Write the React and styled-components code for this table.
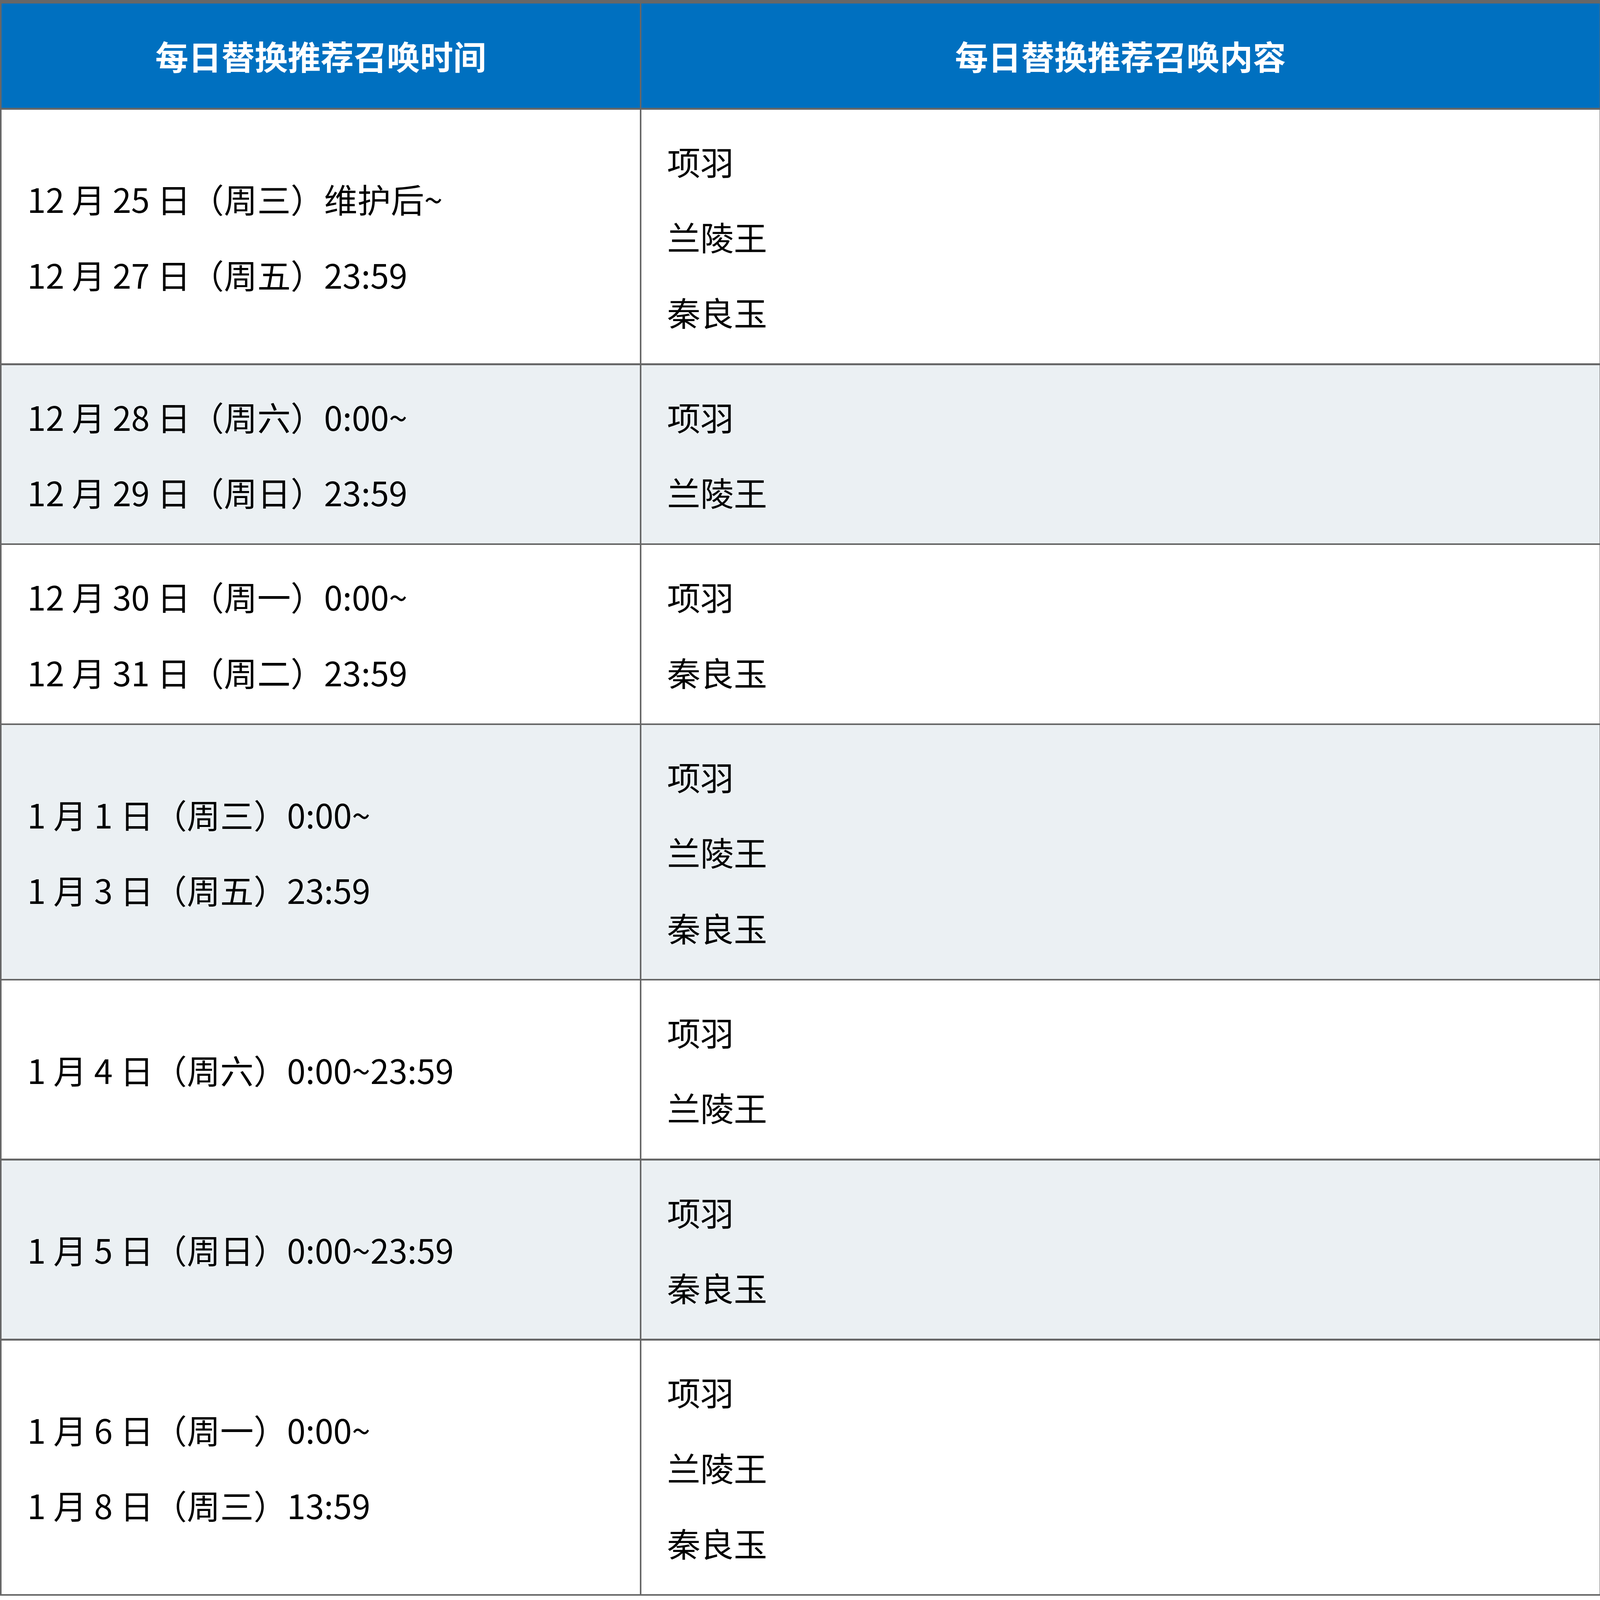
import React from "react";
import styled, { createGlobalStyle } from "styled-components";

// sizes are taken from a 5512px wide layout and scaled to the viewport
const u = (n) => `${((n * 100) / 5512).toFixed(4)}vw`;

const GlobalStyle = createGlobalStyle`
  html, body {
    margin: 0;
    padding: 0;
    background: #ffffff;
    overflow: hidden;
  }
  body {
    font-family: "Microsoft YaHei", "Noto Sans CJK SC", "Noto Sans", sans-serif;
  }
`;

const schedule = [
  {
    time: ["12 月 25 日（周三）维护后~", "12 月 27 日（周五）23:59"],
    heroes: ["项羽", "兰陵王", "秦良玉"],
  },
  {
    time: ["12 月 28 日（周六）0:00~", "12 月 29 日（周日）23:59"],
    heroes: ["项羽", "兰陵王"],
  },
  {
    time: ["12 月 30 日（周一）0:00~", "12 月 31 日（周二）23:59"],
    heroes: ["项羽", "秦良玉"],
  },
  {
    time: ["1 月 1 日（周三）0:00~", "1 月 3 日（周五）23:59"],
    heroes: ["项羽", "兰陵王", "秦良玉"],
  },
  {
    time: ["1 月 4 日（周六）0:00~23:59"],
    heroes: ["项羽", "兰陵王"],
  },
  {
    time: ["1 月 5 日（周日）0:00~23:59"],
    heroes: ["项羽", "秦良玉"],
  },
  {
    time: ["1 月 6 日（周一）0:00~", "1 月 8 日（周三）13:59"],
    heroes: ["项羽", "兰陵王", "秦良玉"],
  },
];

const StyledTable = styled.div`
  display: grid;
  grid-template-columns: ${u(2198)} 1fr;
  gap: ${u(6)};
  width: 100vw;
  box-sizing: border-box;
  padding: ${u(12)} ${u(2)} ${u(6)} ${u(6)};
  background-color: #676767;
`;

const Row = styled.div`
  display: contents;
`;

const HeadCell = styled.div`
  height: ${u(360)};
  display: flex;
  align-items: center;
  justify-content: center;
  background-color: #0070c0;
  color: #ffffff;
  font-size: ${u(114)};
  font-weight: 700;
  line-height: 1;
`;

const Cell = styled.div`
  display: flex;
  flex-direction: column;
  justify-content: center;
  padding: ${u(47)} ${u(88)};
  background-color: ${({ $alt }) => ($alt ? "#ebf0f3" : "#ffffff")};
  color: #000000;
  font-size: ${u(115)};
  line-height: ${u(260)};
  white-space: nowrap;
`;

const Line = styled.div``;

const App = () => (
  <>
    <GlobalStyle />
    <StyledTable>
      <Row>
        <HeadCell>每日替换推荐召唤时间</HeadCell>
        <HeadCell>每日替换推荐召唤内容</HeadCell>
      </Row>
      {schedule.map((item, i) => (
        <Row key={i}>
          <Cell $alt={i % 2 === 1}>
            {item.time.map((t) => (
              <Line key={t}>{t}</Line>
            ))}
          </Cell>
          <Cell $alt={i % 2 === 1}>
            {item.heroes.map((h) => (
              <Line key={h}>{h}</Line>
            ))}
          </Cell>
        </Row>
      ))}
    </StyledTable>
  </>
);

export default App;
